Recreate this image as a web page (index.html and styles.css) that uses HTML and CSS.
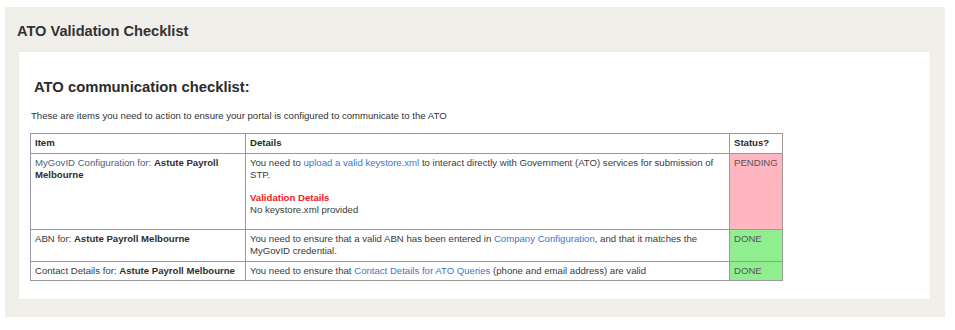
FILE: index.html
```html
<!DOCTYPE html>
<html lang="en">
<head>
<meta charset="utf-8">
<title>ATO Validation Checklist</title>
<link rel="stylesheet" href="styles.css">
</head>
<body>
<div class="panel">
  <h1 class="page-title">ATO Validation Checklist</h1>
  <div class="card">
    <h2 class="card-heading">ATO communication checklist:</h2>
    <p class="intro">These are items you need to action to ensure your portal is configured to communicate to the ATO</p>
    <table class="checklist">
      <colgroup>
        <col class="col-item">
        <col class="col-details">
        <col class="col-status">
      </colgroup>
      <thead>
        <tr>
          <th>Item</th>
          <th>Details</th>
          <th>Status?</th>
        </tr>
      </thead>
      <tbody>
        <tr class="row-tall">
          <td><span class="muted">MyGovID Configuration for:</span> <b>Astute Payroll Melbourne</b></td>
          <td>
            <div>You need to <a href="#">upload a valid keystore.xml</a> to interact directly with Government (ATO) services for submission of STP.</div>
            <div class="validation">
              <div class="validation-title">Validation Details</div>
              <div>No keystore.xml provided</div>
            </div>
          </td>
          <td class="status pending">PENDING</td>
        </tr>
        <tr>
          <td>ABN for: <b>Astute Payroll Melbourne</b></td>
          <td>You need to ensure that a valid ABN has been entered in <a href="#">Company Configuration</a>, and that it matches the MyGovID credential.</td>
          <td class="status done">DONE</td>
        </tr>
        <tr>
          <td>Contact Details for: <b>Astute Payroll Melbourne</b></td>
          <td>You need to ensure that <a href="#">Contact Details for ATO Queries</a> (phone and email address) are valid</td>
          <td class="status done">DONE</td>
        </tr>
      </tbody>
    </table>
  </div>
</div>
</body>
</html>
```
FILE: styles.css
```css
html, body {
  margin: 0;
  padding: 0;
  background: #ffffff;
}

body {
  font-family: "Liberation Sans", Arial, sans-serif;
  color: #333333;
}

.panel {
  margin: 7px 10px 13px 5px;
  width: 940px;
  height: 310px;
  box-sizing: border-box;
  padding: 16px 15px 0 12px;
  background: #f0efea;
}

.page-title {
  margin: 0;
  font-size: 14.6px;
  line-height: 17px;
  font-weight: bold;
  color: #333333;
}

.card {
  margin: 12px 0 0 2px;
  height: 247px;
  box-sizing: border-box;
  padding: 26px 12px 0 12px;
  background: #ffffff;
  box-shadow: 0 0 1px rgba(0, 0, 0, 0.08);
}

.card-heading {
  margin: 0 0 0 3px;
  font-size: 14.8px;
  line-height: 18px;
  font-weight: bold;
  color: #2b2b2b;
}

.intro {
  margin: 13px 0 0 0;
  font-size: 9.6px;
  line-height: 13px;
  color: #333333;
}

.checklist {
  margin-top: 11px;
  margin-left: -1px;
  border-collapse: collapse;
  width: 752px;
  table-layout: fixed;
  border: 1.5px solid #555555;
  font-size: 9.6px;
  line-height: 12.5px;
  color: #3a3a3a;
}

.col-item { width: 215px; }
.col-details { width: 484px; }
.col-status { width: 53px; }

.checklist th,
.checklist td {
  border: 1px solid #9a9a9a;
  padding: 3px 4px 3px 4px;
  text-align: left;
  vertical-align: top;
}

.checklist th {
  font-weight: bold;
  color: #2a2a2a;
}

.checklist b {
  color: #2f2f2f;
}

.muted {
  color: #4f6276;
}

.checklist a {
  color: #3a78c8;
  text-decoration: none;
}

.validation {
  margin-top: 10px;
  margin-bottom: 9px;
}

.validation-title {
  color: #ee1c25;
  font-weight: bold;
}

.status {
  color: #555555;
  padding-left: 4px;
  padding-right: 2px;
}

.pending {
  background: #ffb6c1;
}

.done {
  background: #90ee90;
}
```
